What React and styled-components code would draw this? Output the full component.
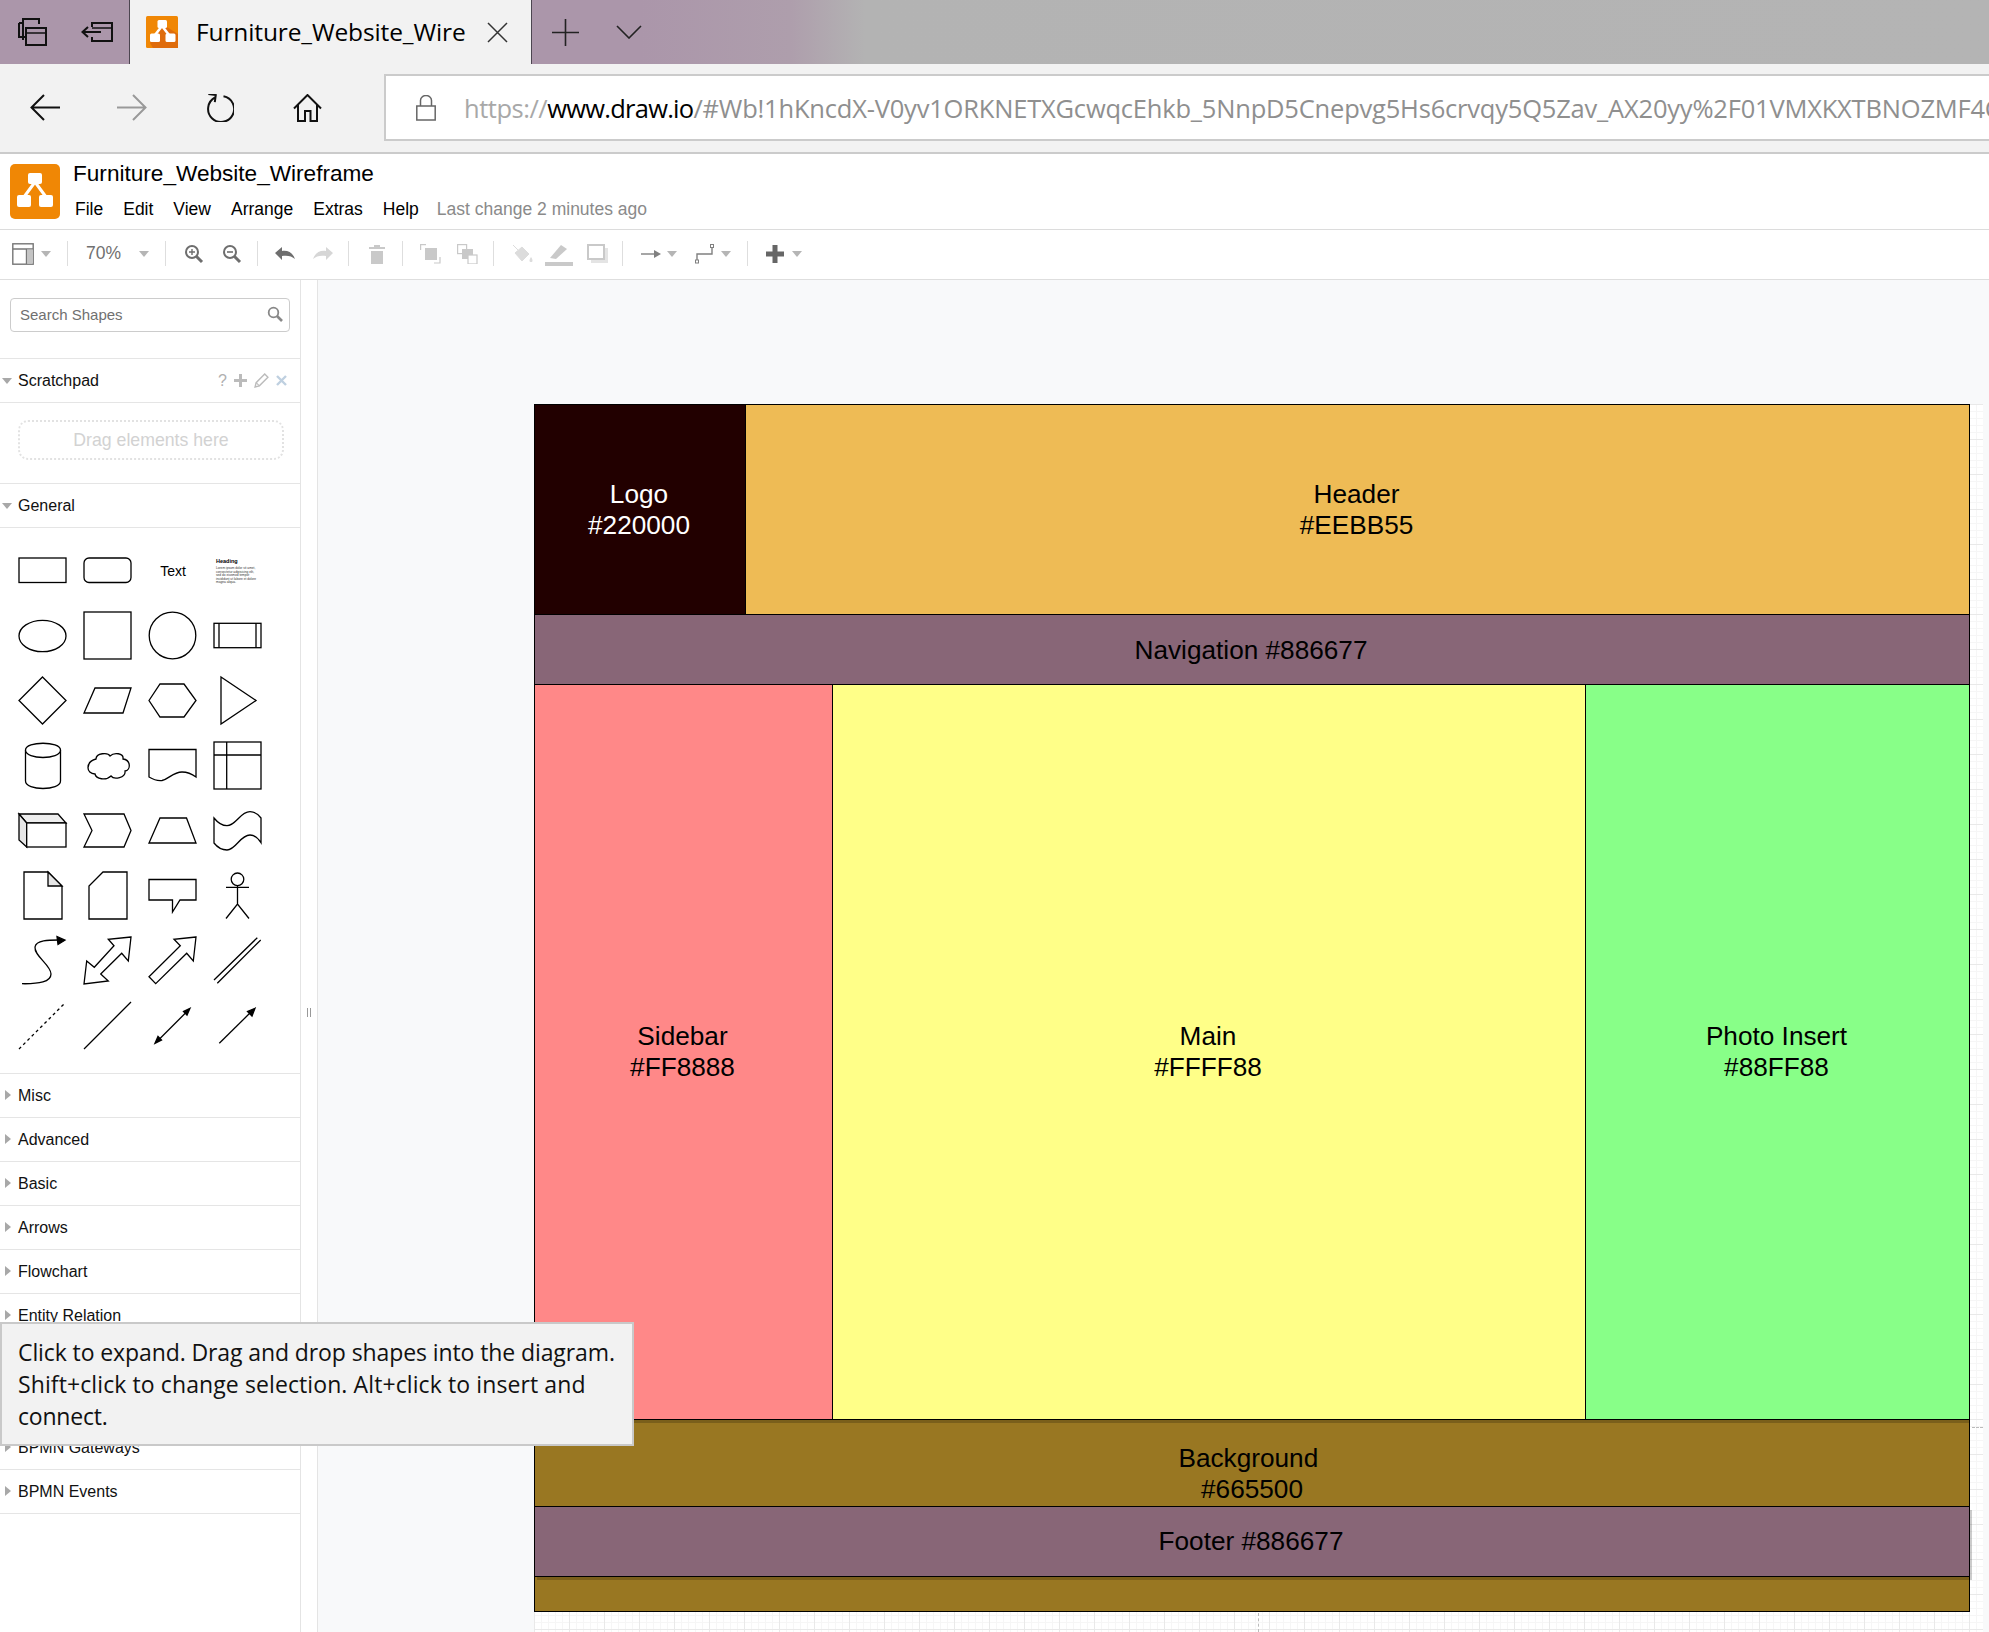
import React from "react";
import styled, { createGlobalStyle } from "styled-components";

const Global = createGlobalStyle`
  html, body { margin: 0; padding: 0; background: #fff; }
  * { box-sizing: border-box; }
`;
const SANS = `"Liberation Sans", Arial, sans-serif`;
const UI = `"Open Sans", "Noto Sans", sans-serif`;

const Shell = styled.div`
  width: 1989px; height: 1632px; overflow: hidden; position: relative;
  display: flex; flex-direction: column; font-family: ${SANS}; color: #000;
`;

/* browser chrome */
const TabBar = styled.div`
  height: 64px; flex: none; display: flex; align-items: center;
  background: linear-gradient(90deg, #ab96aa 0, #ab96aa 640px, #ae9eac 790px, #b3b3b3 865px, #b4b4b4 100%);
`;
const Slot = styled.span`
  display: flex; flex: none; align-items: center; justify-content: center;
  margin-left: ${p => p.$ml || 0}px;
`;
const Tab = styled.div`
  width: 403px; height: 64px; margin-left: 16px; flex: none; background: #f2f2f2;
  border-left: 1px solid #4c4550; border-right: 1px solid #4c4550;
  display: flex; align-items: center;
`;
const TabTitle = styled.span`
  font: 400 24.5px ${UI}; letter-spacing: -.12px; margin: -2px 0 0 18px; width: 291px; white-space: nowrap;
`;
const NavBar = styled.div`
  height: 90px; flex: none; background: #f2f2f2; border-bottom: 2px solid #cbcbcb;
  display: flex; align-items: flex-start; padding-top: 10px;
`;
const NavIcons = styled.div`
  display: flex; align-items: center; height: 67px; flex: none;
`;
const Address = styled.div`
  width: 1700px; height: 67px; margin-left: 62px; flex: none; background: #fff;
  border: 2px solid #cbcbcb; border-right: 0;
  display: flex; align-items: center; overflow: hidden;
`;
const Url = styled.span`
  font: 400 25.5px ${UI}; letter-spacing: -.2px; color: #8f8f8f; white-space: nowrap; margin-left: 28px;
  b { font-weight: 400; color: #000; letter-spacing: -.75px; }
  i { font-style: normal; color: #a8a8a8; letter-spacing: -.47px; }
`;

/* app header */
const AppHeader = styled.div`
  height: 76px; flex: none; border-bottom: 1px solid #dcdcdc; display: flex; padding: 10px 0 0 10px; background: #fff;
`;
const AppLogo = styled.div`
  width: 50px; height: 55px; border-radius: 5px; background: #f08705; flex: none;
`;
const HeaderText = styled.div`
  margin-left: 13px; display: flex; flex-direction: column;
`;
const DocTitle = styled.div`
  font-size: 22.6px; line-height: 26px; margin-top: -3px; white-space: nowrap; color: #000;
`;
const Menu = styled.div`
  display: flex; margin-top: 10px; margin-left: 2px; font-size: 17.5px; line-height: 24px; white-space: nowrap;
`;
const MenuItem = styled.span`
  margin-right: 20px;
`;
const Status = styled.span`
  color: #8a8a8a; font-size: 17.5px; margin-left: -2px;
`;

/* toolbar */
const Toolbar = styled.div`
  height: 50px; flex: none; border-bottom: 1px solid #dedede; display: flex; align-items: center; background: #fff;
  padding-bottom: 2px;
`;
const Sep = styled.span`
  width: 1px; height: 25px; flex: none; background: #dedede; margin-left: ${p => p.$ml}px;
`;
const Caret = styled.span`
  flex: none; width: 0; height: 0; margin-left: ${p => p.$ml}px;
  border-left: 5.5px solid transparent; border-right: 5.5px solid transparent;
  border-top: 6px solid #b5b5b5;
`;
const Zoom = styled.span`
  flex: none; font-size: 17.5px; color: #707070; margin-left: ${p => p.$ml}px; width: 36px;
`;

/* main */
const Main = styled.div`
  flex: 1; display: flex; min-height: 0;
`;
const Sidebar = styled.aside`
  width: 301px; flex: none; border-right: 1px solid #e4e4e4; background: #fff; overflow: hidden;
  padding-top: 18px;
`;
const Search = styled.div`
  width: 280px; height: 34px; margin: 0 0 26px 10px; border: 1px solid #ccc; border-radius: 4px;
  display: flex; align-items: center; justify-content: space-between; padding: 0 6px 2px 9px;
  font-size: 15px; color: #707070;
`;
const Section = styled.div`
  height: 44px; border-top: 1px solid #e5e5e5; display: flex; align-items: center;
  font-size: 16px; color: #111; position: relative; padding-left: 18px;
`;
const LastSection = styled.div`
  border-top: 1px solid #e5e5e5;
`;
const Down = styled.span`
  position: absolute; left: 2px; top: 19px; width: 0; height: 0;
  border-left: 5.5px solid transparent; border-right: 5.5px solid transparent; border-top: 6px solid #a8a8a8;
`;
const Right = styled.span`
  position: absolute; left: 5px; top: 16px; width: 0; height: 0;
  border-top: 5.5px solid transparent; border-bottom: 5.5px solid transparent; border-left: 6px solid #a8a8a8;
`;
const PadTools = styled.span`
  position: absolute; left: 218px; top: 0; height: 100%; display: flex; align-items: center; gap: 7px;
  font-size: 16px; color: #b0b0b0;
`;
const DropWrap = styled.div`
  height: 81px; border-top: 1px solid #e5e5e5; padding: 17px 0 0 18px;
`;
const DropZone = styled.div`
  width: 266px; height: 40px; border: 2px dotted #e2e2e2; border-radius: 10px;
  display: flex; align-items: center; justify-content: center;
  font-size: 17.7px; color: #d2d2d2;
`;
const ShapeGrid = styled.div`
  height: 546px; border-top: 1px solid #e5e5e5; padding: 19px 0 0 19px;
  display: grid; grid-template-columns: repeat(4, 48px); grid-auto-rows: 48px; gap: 17px;
`;
const Shape = styled.svg`
  width: 48px; height: 48px; display: block; overflow: visible;
  fill: #fff; stroke: #000; stroke-width: 1.3;
`;
const TextCell = styled.div`
  display: flex; align-items: center; justify-content: center; font-size: 14px; margin-top: -1px;
`;
const HeadingCell = styled.div`
  padding: 11px 0 0 2px; color: #333; overflow: hidden; width: 48px;
  strong { display: block; font-size: 5.5px; line-height: 6px; color: #000; }
  span { display: block; width: 42px; font-size: 3.2px; line-height: 3.6px; margin-top: 3px; }
`;
const Gutter = styled.div`
  width: 17px; flex: none; border-right: 1px solid #e4e4e4; background: #fff; position: relative;
`;
const Handle = styled.span`
  position: absolute; left: 6px; top: 728px; width: 4px; height: 9px;
  border-left: 1px solid #999; border-right: 1px solid #999;
`;
const Canvas = styled.div`
  flex: 1; background: #f8f9fa; padding: 124px 6px 0 216px; min-width: 0;
`;
const Page = styled.div`
  height: 100%; position: relative; background-color: #fff;
  background-image:
    linear-gradient(#e9e9e9 1px, transparent 1px),
    linear-gradient(90deg, #e9e9e9 1px, transparent 1px),
    linear-gradient(#f6f6f6 1px, transparent 1px),
    linear-gradient(90deg, #f6f6f6 1px, transparent 1px);
  background-size: 35px 35px, 35px 35px, 7px 7px, 7px 7px;
  &::before {
    content: ""; position: absolute; left: 1438px; right: 0; top: 1023px; border-top: 1px dashed #bbb;
  }
  &::after {
    content: ""; position: absolute; left: 724px; top: 1209px; bottom: 0; border-left: 1px dashed #bbb;
  }
`;
const Wire = styled.div`
  width: 1436px; height: 1208px; border-left: 1px solid #000; border-top: 1px solid #000;
  display: grid; grid-template-columns: 298px 753px 384px; grid-template-rows: 210px 70px 735px 87px 70px 35px;
  font-size: 26.2px; line-height: 31px;
`;
const Cell = styled.div`
  grid-column: ${p => p.$col || "auto"};
  background: ${p => p.$bg};
  color: ${p => p.$fg || "#000"};
  border-right: 1px solid #000; border-bottom: 1px solid #000;
  display: flex; align-items: center; justify-content: center; text-align: center;
  position: relative;
  padding-top: ${p => p.$pt || 0}px; padding-right: 2px;
  ${p => p.$drop ? `box-shadow: ${p.$drop}px 3px 0 rgba(0,0,0,.2); z-index: 1;` : ""}
`;
const TopRow = styled.div`
  grid-column: 1 / -1; display: grid; grid-template-columns: 211px 1fr;
`;
const BgCell = styled(Cell)`
  grid-column: 1 / -1; align-items: flex-start; padding-top: 23px; padding-right: 0;
`;
const Tooltip = styled.div`
  position: absolute; left: 0; top: 1322px; width: 634px; height: 124px; z-index: 5;
  background: #f2f2f2; border: 2px solid #c9c9c9; padding: 12px 0 0 16px;
  font: 400 23px/32px ${UI}; color: #111; white-space: nowrap;
`;
const TipLine = styled.div`
  letter-spacing: ${p => p.$ls}px;
`;

const On = "#6e6e6e";
const Off = "#c9c9c9";

function Ic({ w, h, ml, children }) {
  return (
    <Slot $ml={ml}>
      <svg width={w} height={h} viewBox={`0 0 ${w} ${h}`} fill="none">{children}</svg>
    </Slot>
  );
}

const Logo = () => (
  <svg width="50" height="55" viewBox="0 0 50 55">
    <path d="M25 18L14 33M25 18L36 33" stroke="#fff" strokeWidth="3" fill="none" />
    <rect x="18" y="9" width="14" height="11" rx="2" fill="#fff" />
    <rect x="7" y="31" width="14" height="12" rx="2" fill="#fff" />
    <rect x="29" y="31" width="14" height="12" rx="2" fill="#fff" />
  </svg>
);

const shapes = [
  <rect x="0" y="11" width="47" height="24.5" />,
  <rect x="0" y="11" width="47" height="24.5" rx="5" />,
  null,
  null,
  <ellipse cx="23.5" cy="24" rx="23.5" ry="15.7" />,
  <rect x="0" y="0" width="47" height="47" />,
  <circle cx="23.5" cy="23.5" r="23.3" />,
  <><rect x="0" y="11.3" width="47" height="24.4" /><path d="M5 11.3V35.7M42 11.3V35.7" /></>,

  <polygon points="23.5,0 47,23.5 23.5,47 0,23.5" />,
  <polygon points="11,11 47,11 39,36 0,36" />,
  <polygon points="0,23.5 11,7 35,7 47,23.5 35,40 11,40" />,
  <polygon points="7,0 42,23.5 7,47" />,

  <><path d="M6.5 8C6.5 -1 41.5 -1 41.5 8V39C41.5 49 6.5 49 6.5 39Z" /><path d="M6.5 8C6.5 18 41.5 18 41.5 8" /></>,
  <path d="M12 17C12 11 24 10 26 14C30 10 40 11 39 17C47 18 47 28 41 29C42 36 30 38 27 34C22 39 12 37 11 32C2 32 1 20 12 17Z" />,
  <path d="M0 7.5H47V35C43 32 38 30 33 30C24 30 20 37 13 38.5C9 39 5 38 0 35Z" />,
  <><rect x="0" y="0" width="47" height="47" /><path d="M12.7 0V47M0 13H47" /></>,

  <><polygon points="0,7 39,7 47,16 7.7,16" fill="#eee" /><polygon points="0,7 7.7,16 7.7,40 0,33" fill="#e6e6e6" /><rect x="7.7" y="16" width="39.3" height="24" /></>,
  <polygon points="0,7 40,7 47,23.5 40,40 0,40 8,23.5" />,
  <polygon points="11,11 37.5,11 47,36 0,36" />,
  <path d="M0 11C4 16 8 18.7 13 18.7C22 18.7 26 4.7 36 4.7C41 4.7 44 7 47 11V35.7C44 31 41 28 36 28C26 28 22 43 13 43C8 43 4 41 0 36Z" />,

  <><polygon points="5,0 29,0 43,14 43,47 5,47" /><polygon points="29,0 43,14 29,14" fill="#e6e6e6" /></>,
  <polygon points="19,0 43,0 43,47 5,47 5,14" />,
  <polygon points="0,7.5 47,7.5 47,28 31,28 23.5,40 23.5,28 0,28" />,
  <><circle cx="23.5" cy="7.3" r="6.3" /><path d="M23.5 13.6V32M12 15.3H35M12 46.5L23.5 32L35 46.5" fill="none" /></>,

  <><path d="M3 46.7C20 47 32 45 32 37C32 28 15 19 16 10C17 3 30 3 40 3" fill="none" /><polygon points="46,3.2 38,-.5 39,7.5" fill="#000" /></>,
  <polygon points="47,0 24.3,2.3 30,8.7 10.3,30.3 2.7,24 0,47 24.3,44 16.7,37 37.7,16.3 44.3,24" />,
  <polygon points="47,0 25,2.3 31.3,8.7 0,39.7 6.7,46.7 37.7,16.3 44.3,24" />,
  <path d="M0 43L43.3 .7M3.3 46.3L46.7 3" fill="none" />,

  <path d="M0 47L45 2" fill="none" strokeDasharray="3 3" />,
  <path d="M0 47L47 0" fill="none" />,
  <><path d="M8 39.5L39 8.5" fill="none" /><polygon points="41,6.3 38,13 34.5,9.5" fill="#000" /><polygon points="6,41.3 9,34.5 12.5,38" fill="#000" /></>,
  <><path d="M5.3 41.3L37 10" fill="none" /><polygon points="41,6.3 38,14 33.5,9.5" fill="#000" /></>,
];

const sections = ["Misc", "Advanced", "Basic", "Arrows", "Flowchart", "Entity Relation", "", "", "BPMN Gateways", "BPMN Events"];

export default function App() {
  return (
    <Shell>
      <Global />
      <TabBar>
        <Ic w={29} h={28} ml={18}>
          <g stroke="#111" strokeWidth="2">
            <path d="M5 10V1H21V6" /><path d="M1 5H5V22" /><path d="M1 5V19H7" />
            <rect x="8" y="10" width="20" height="17" /><path d="M8 15H28" strokeWidth="1.5" />
          </g>
        </Ic>
        <Ic w={32} h={20} ml={34}>
          <g stroke="#111" strokeWidth="2">
            <path d="M11 5V1H31V19H11V15" /><path d="M11 6H31" strokeWidth="1.5" />
            <path d="M20 10H2M7 5L1.5 10L7 15" />
          </g>
        </Ic>
        <Tab>
          <Slot $ml={16}>
            <svg width="32" height="32" viewBox="0 0 32 32">
              <rect width="32" height="32" rx="1.5" fill="#f08705" />
              <path d="M16 8L32 18V32H7L4 27Z" fill="#df6c0c" />
              <path d="M16 10L9 19M16 10L23 19" stroke="#fff" strokeWidth="2.6" fill="none" />
              <rect x="11.5" y="4" width="9.5" height="8" rx="1.5" fill="#fff" />
              <rect x="4" y="17.5" width="10" height="8.5" rx="1.5" fill="#fff" />
              <rect x="19.5" y="17.5" width="10" height="8.5" rx="1.5" fill="#fff" />
            </svg>
          </Slot>
          <TabTitle>Furniture_Website_Wire</TabTitle>
          <Ic w={21} h={21} ml={0}><path d="M1 1L20 20M20 1L1 20" stroke="#333" strokeWidth="1.5" /></Ic>
        </Tab>
        <Ic w={27} h={27} ml={20}><path d="M13.5 0V27M0 13.5H27" stroke="#222" strokeWidth="1.6" /></Ic>
        <Ic w={26} h={14} ml={37}><path d="M1 1L13 13L25 1" stroke="#222" strokeWidth="1.6" fill="none" /></Ic>
      </TabBar>

      <NavBar>
        <NavIcons>
          <Ic w={30} h={27} ml={30}><path d="M30 13.5H1.5M14 1L1.5 13.5L14 26" stroke="#111" strokeWidth="2" fill="none" /></Ic>
          <Ic w={30} h={27} ml={57}><path d="M0 13.5H28.5M16 1L28.5 13.5L16 26" stroke="#999" strokeWidth="2" fill="none" /></Ic>
          <Ic w={28} h={28} ml={59}>
            <path d="M9 3.5A13 13 0 1 0 17.5 2.2" stroke="#111" strokeWidth="2" fill="none" />
            <path d="M2 1H9.5V8" stroke="#111" strokeWidth="2" fill="none" transform="rotate(8 9 3)" />
          </Ic>
          <Ic w={29} h={28} ml={59}>
            <path d="M1 14.5L14.5 1L28 14.5M5 11V27H12V17H17.5V27H24V11" stroke="#111" strokeWidth="2" fill="none" />
          </Ic>
        </NavIcons>
        <Address>
          <Ic w={20} h={26} ml={30}>
            <path d="M4.5 11V5.5A5.5 5 0 0 1 15.5 5.5V11" stroke="#666" strokeWidth="1.5" fill="none" />
            <rect x=".8" y="11" width="18.4" height="14" stroke="#666" strokeWidth="1.5" />
          </Ic>
          <Url><i>https://</i><b>www.draw.io</b>/#Wb!1hKncdX-V0yv1ORKNETXGcwqcEhkb_5NnpD5Cnepvg5Hs6crvqy5Q5Zav_AX20yy%2F01VMXKXTBNOZMF4C</Url>
        </Address>
      </NavBar>

      <AppHeader>
        <AppLogo><Logo /></AppLogo>
        <HeaderText>
          <DocTitle>Furniture_Website_Wireframe</DocTitle>
          <Menu>
            <MenuItem>File</MenuItem>
            <MenuItem>Edit</MenuItem>
            <MenuItem>View</MenuItem>
            <MenuItem>Arrange</MenuItem>
            <MenuItem>Extras</MenuItem>
            <MenuItem>Help</MenuItem>
            <Status>Last change 2 minutes ago</Status>
          </Menu>
        </HeaderText>
      </AppHeader>

      <Toolbar>
        <Ic w={22} h={22} ml={12}>
          <rect x=".8" y=".8" width="20.4" height="20.4" stroke="#777" strokeWidth="1.4" />
          <path d="M1 6H21M14.5 6V21" stroke="#777" strokeWidth="1.4" />
          <rect x="15" y="6.5" width="6" height="14" fill="#c4c4c4" />
        </Ic>
        <Caret $ml={7} />
        <Sep $ml={16} />
        <Zoom $ml={18}>70%</Zoom>
        <Caret $ml={17} />
        <Sep $ml={16} />
        <Ic w={20} h={20} ml={18}>
          <circle cx="8" cy="8" r="6" stroke={On} strokeWidth="2" />
          <path d="M12.5 12.5L18 18" stroke={On} strokeWidth="3" />
          <path d="M5 8H11M8 5V11" stroke={On} strokeWidth="1.4" />
        </Ic>
        <Ic w={20} h={20} ml={18}>
          <circle cx="8" cy="8" r="6" stroke={On} strokeWidth="2" />
          <path d="M12.5 12.5L18 18" stroke={On} strokeWidth="3" />
          <path d="M5 8H11" stroke={On} strokeWidth="1.6" />
        </Ic>
        <Sep $ml={15} />
        <Ic w={20} h={14} ml={17}>
          <path d="M0 6L7 0V4C13 3 18 6 20 12C17 9 12 8 7 9V13Z" fill={On} />
        </Ic>
        <Ic w={20} h={14} ml={18}>
          <path d="M20 6L13 0V4C7 3 2 6 0 12C3 9 8 8 13 9V13Z" fill="#d6d6d6" />
        </Ic>
        <Sep $ml={15} />
        <Ic w={20} h={20} ml={18}>
          <path d="M2 5H18V3H13V1H7V3H2ZM4 7H16V20H4Z" fill={Off} />
        </Ic>
        <Sep $ml={15} />
        <Ic w={21} h={20} ml={17}>
          <rect x="5" y="4" width="12" height="12" fill={Off} />
          <path d="M.6 6V.6H6M20 13V19H14" stroke={Off} strokeWidth="1.2" />
        </Ic>
        <Ic w={21} h={20} ml={16}>
          <rect x=".6" y=".6" width="9" height="9" stroke={Off} strokeWidth="1.2" />
          <rect x="5" y="5" width="11" height="10" fill={Off} />
          <rect x="11" y="11" width="9" height="9" fill="#fff" stroke={Off} strokeWidth="1.2" />
        </Ic>
        <Sep $ml={15} />
        <Ic w={21} h={20} ml={18}>
          <path d="M1 1L6 6M3 9L10 3L17 10L10 17Z" stroke="#dcdcdc" strokeWidth="1" fill="#dcdcdc" />
          <path d="M19 13C21 16 21 18 19 18C17 18 17 16 19 13Z" fill="#dcdcdc" />
        </Ic>
        <Ic w={28} h={24} ml={12}>
          <path d="M5 16L16 3L22 7L11 17Z" fill={Off} />
          <rect x="0" y="20" width="28" height="4" fill={Off} />
        </Ic>
        <Ic w={21} h={20} ml={14}>
          <rect x="4" y="4" width="17" height="15" fill="#e4e4e4" />
          <rect x="1" y="1" width="16" height="14" fill="#fff" stroke={Off} strokeWidth="2" />
        </Ic>
        <Sep $ml={14} />
        <Ic w={20} h={10} ml={18}>
          <path d="M0 5H15" stroke="#808080" strokeWidth="1.4" />
          <path d="M20 5L13 1V9Z" fill="#808080" />
        </Ic>
        <Caret $ml={6} />
        <Ic w={21} h={20} ml={18}>
          <path d="M2 17V10H17V3" stroke="#808080" strokeWidth="1.4" fill="none" />
          <rect x="15.5" y=".5" width="3" height="3" stroke="#808080" fill="#fff" />
          <rect x=".5" y="16" width="3" height="3" stroke="#808080" fill="#fff" />
        </Ic>
        <Caret $ml={5} />
        <Sep $ml={16} />
        <Ic w={18} h={18} ml={18}>
          <path d="M6.5 0H11.5V6.5H18V11.5H11.5V18H6.5V11.5H0V6.5H6.5Z" fill="#666" />
        </Ic>
        <Caret $ml={8} />
      </Toolbar>

      <Main>
        <Sidebar>
          <Search>
            Search Shapes
            <svg width="16" height="16" viewBox="0 0 16 16" fill="none">
              <circle cx="6.5" cy="6.5" r="4.8" stroke="#888" strokeWidth="1.8" />
              <path d="M10 10L15 15" stroke="#888" strokeWidth="2.6" />
            </svg>
          </Search>
          <Section>
            <Down />Scratchpad
            <PadTools>
              ?
              <svg width="13" height="13" viewBox="0 0 13 13"><path d="M5 0H8V5H13V8H8V13H5V8H0V5H5Z" fill="#bbb" /></svg>
              <svg width="15" height="15" viewBox="0 0 14 14" fill="none"><path d="M1 13L2 9L10 1L13 4L5 12Z" stroke="#bbb" strokeWidth="1.3" /><path d="M2 9L5 12" stroke="#bbb" /></svg>
              <svg width="11" height="11" viewBox="0 0 11 11"><path d="M1 1L10 10M10 1L1 10" stroke="#bfd0e0" strokeWidth="2.4" /></svg>
            </PadTools>
          </Section>
          <DropWrap><DropZone>Drag elements here</DropZone></DropWrap>
          <Section><Down />General</Section>
          <ShapeGrid>
            {shapes.map((s, i) => {
              if (i === 2) return <TextCell key={i}>Text</TextCell>;
              if (i === 3) return (
                <HeadingCell key={i}>
                  <strong>Heading</strong>
                  <span>Lorem ipsum dolor sit amet, consectetur adipisicing elit, sed do eiusmod tempor incididunt ut labore et dolore magna aliqua.</span>
                </HeadingCell>
              );
              return <Shape key={i} viewBox="0 0 48 48">{s}</Shape>;
            })}
          </ShapeGrid>
          {sections.map((n, i) => <Section key={i}>{n && <Right />}{n}</Section>)}
          <LastSection />
        </Sidebar>
        <Gutter><Handle /></Gutter>
        <Canvas>
          <Page>
            <Wire>
              <TopRow>
                <Cell $bg="#220000" $fg="#fff">Logo<br />#220000</Cell>
                <Cell $bg="#EEBB55">Header<br />#EEBB55</Cell>
              </TopRow>
              <Cell $col="1 / -1" $bg="#886677" $pt={1}>Navigation #886677</Cell>
              <Cell $bg="#FF8888" $drop="0.001">Sidebar<br />#FF8888</Cell>
              <Cell $bg="#FFFF88" $drop="0.001">Main<br />#FFFF88</Cell>
              <Cell $bg="#88FF88" $drop="0.001">Photo Insert<br />#88FF88</Cell>
              <BgCell $bg="#997722"><span>Background&nbsp;<br />#665500</span></BgCell>
              <Cell $col="1 / -1" $bg="#886677" $drop="2">Footer #886677</Cell>
              <Cell $col="1 / -1" $bg="#997722" />
            </Wire>
          </Page>
        </Canvas>
      </Main>

      <Tooltip>
        <TipLine $ls={-0.1}>Click to expand. Drag and drop shapes into the diagram.</TipLine>
        <TipLine $ls={0.1}>Shift+click to change selection. Alt+click to insert and</TipLine>
        <TipLine $ls={-0.2}>connect.</TipLine>
      </Tooltip>
    </Shell>
  );
}
